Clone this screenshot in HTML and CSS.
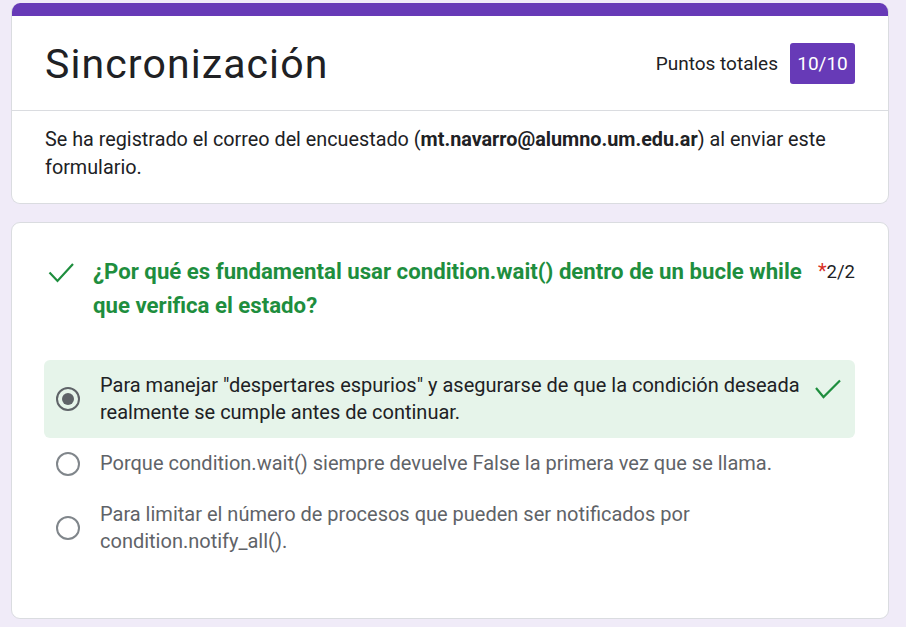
FILE: index.html
```html
<!DOCTYPE html>
<html lang="es">
<head>
<meta charset="utf-8">
<title>Sincronización</title>
<link rel="stylesheet" href="styles.css">
</head>
<body>
<main class="page">
  <section class="card header-card">
    <div class="band"></div>
    <div class="title-row">
      <h1 class="title">Sincronización</h1>
      <div class="score">
        <span class="score-label">Puntos totales</span>
        <span class="score-badge">10/10</span>
      </div>
    </div>
    <div class="divider"></div>
    <p class="notice">Se ha registrado el correo del encuestado (<b>mt.navarro@alumno.um.edu.ar</b>) al enviar este formulario.</p>
  </section>

  <section class="card question-card">
    <div class="question-row">
      <svg class="q-check" width="26" height="22" viewBox="0 0 26 22"><polyline points="1.5,10.5 9.5,19 25,2" fill="none" stroke="#1e8e3e" stroke-width="2.2"/></svg>
      <h2 class="question">¿Por qué es fundamental usar condition.wait() dentro de un bucle while que verifica el estado?</h2>
      <div class="points"><span class="req">*</span>2/2</div>
    </div>
    <div class="options">
      <div class="option correct">
        <span class="radio checked"></span>
        <span class="opt-text">Para manejar "despertares espurios" y asegurarse de que la condición deseada realmente se cumple antes de continuar.</span>
        <svg class="o-check" width="26" height="20" viewBox="0 0 26 20"><polyline points="1,9 8.5,18 25,1.5" fill="none" stroke="#1e8e3e" stroke-width="2.2"/></svg>
      </div>
      <div class="option">
        <span class="radio"></span>
        <span class="opt-text">Porque condition.wait() siempre devuelve False la primera vez que se llama.</span>
      </div>
      <div class="option">
        <span class="radio"></span>
        <span class="opt-text">Para limitar el número de procesos que pueden ser notificados por condition.notify_all().</span>
      </div>
    </div>
  </section>
</main>
</body>
</html>
```

FILE: styles.css
```css
* { box-sizing: border-box; }
html, body { margin: 0; padding: 0; }
body {
  background: #f0ebf8;
  font-family: Roboto, "Liberation Sans", Arial, sans-serif;
  color: #202124;
}
.page {
  width: 878px;
  margin-left: 11px;
  padding-top: 3px;
  display: flex;
  flex-direction: column;
  gap: 18px;
}
.card {
  background: #fff;
  border: 1px solid #dadce0;
  border-radius: 9px;
  overflow: hidden;
}
.header-card { border-top: none; }
.band { height: 13px; background: #673ab7; }
.title-row {
  height: 94px;
  display: flex;
  align-items: center;
  justify-content: space-between;
  padding: 0 33px 0 33px;
}
.title {
  margin: 0;
  font-size: 41px;
  font-weight: 400;
  letter-spacing: 1.1px;
  line-height: 48px;
  color: #202124;
  padding-top: 1px;
}
.score { display: flex; align-items: center; gap: 12px; }
.score-label { font-size: 19px; color: #202124; }
.score-badge {
  background: #673ab7;
  color: #fff;
  font-size: 19px;
  height: 41px;
  width: 65px;
  display: flex;
  align-items: center;
  justify-content: center;
  border-radius: 3px;
}
.divider { height: 1px; background: #dadce0; }
.notice {
  margin: 0;
  padding: 15px 33px 21px 33px;
  font-size: 19.8px;
  line-height: 28px;
  color: #202124;
}
.notice b { font-weight: 700; }

.question-card { padding: 31px 33px 51px 32px; }
.question-row {
  display: flex;
  align-items: flex-start;
}
.q-check { flex: none; margin: 8px 0 0 4px; }
.question {
  flex: 1;
  margin: 0 0 0 19px;
  font-size: 22.2px;
  font-weight: 700;
  line-height: 34px;
  color: #1e8e3e;
}
.points {
  flex: none;
  font-size: 18.5px;
  line-height: 34px;
  margin-left: 16px;
  color: #202124;
}
.req { color: #d93025; font-size: 20px; }
.options {
  margin-top: 38px;
  display: flex;
  flex-direction: column;
}
.option {
  display: flex;
  align-items: center;
  padding: 12px 12px;
  border-radius: 6px;
}
.option.correct { background: #e6f4ea; }
.radio {
  flex: none;
  width: 24px;
  height: 24px;
  border: 2px solid #5f6368;
  border-radius: 50%;
  display: flex;
  align-items: center;
  justify-content: center;
  margin-right: 20px;
}
.option:not(.correct) .radio { border-color: #80868b; }
.radio.checked::after {
  content: "";
  width: 12px;
  height: 12px;
  border-radius: 50%;
  background: #5f6368;
}
.opt-text {
  flex: 1;
  font-size: 20px;
  line-height: 27px;
  color: #5f6368;
}
.correct .opt-text { color: #202124; }
.o-check { flex: none; align-self: flex-start; margin: 7px 2px 0 8px; }
```
